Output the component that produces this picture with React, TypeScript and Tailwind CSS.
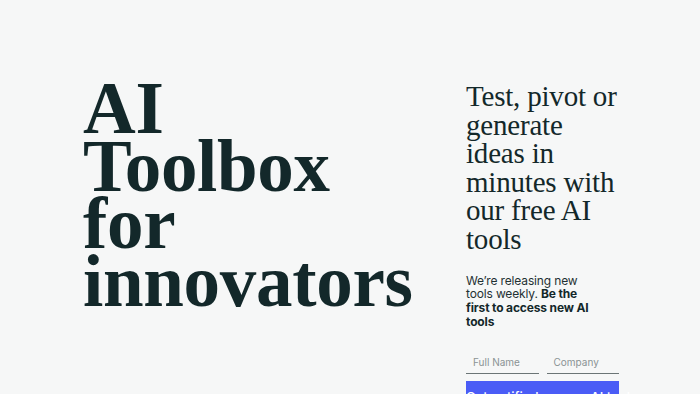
import React from "react";

export default function App() {
  return (
    <div className="min-h-[394px] w-full bg-[#f6f7f7] text-[#13282a]">
      <div className="flex items-start pl-[83px] pt-[80px]">
        <div className="w-[383px] shrink-0">
          <h1 className="font-['Liberation_Serif',serif] text-[73px] font-bold leading-[57.5px] tracking-[-0.3px]">
            AI
            <br />
            Toolbox
            <br />
            for
            <br />
            innovators
          </h1>
        </div>
        <div className="mt-[2px] flex w-[153px] shrink-0 flex-col">
          <h2 className="whitespace-nowrap font-['Liberation_Serif',serif] text-[29px] font-normal leading-[28.6px] tracking-[-0.2px]">
            Test, pivot or
            <br />
            generate
            <br />
            ideas in
            <br />
            minutes with
            <br />
            our free AI
            <br />
            tools
          </h2>
          <p className="mt-[20px] w-[126px] font-['Inter',sans-serif] text-[12px] leading-[13.7px] tracking-[-0.15px] text-[#1f3133]">
            We’re releasing new tools weekly.{" "}
            <span className="font-bold text-[#13282a]">Be the first to access new AI tools</span>
          </p>
          <div className="mt-[22px] flex gap-[8px]">
            <div className="flex h-[24px] flex-1 items-center border-b border-[#6b7576] pl-[7px] pt-[2px] font-['Inter',sans-serif] text-[10px] text-[#8a9394]">
              Full Name
            </div>
            <div className="flex h-[24px] flex-1 items-center border-b border-[#6b7576] pl-[7px] pt-[2px] font-['Inter',sans-serif] text-[10px] text-[#8a9394]">
              Company
            </div>
          </div>
          <button className="mt-[7px] w-full whitespace-nowrap bg-[#4a5cf6] py-[8px] font-['Inter',sans-serif] text-[13px] font-medium leading-[16px] text-white">
            Get notified on new AI tools
          </button>
        </div>
      </div>
    </div>
  );
}
